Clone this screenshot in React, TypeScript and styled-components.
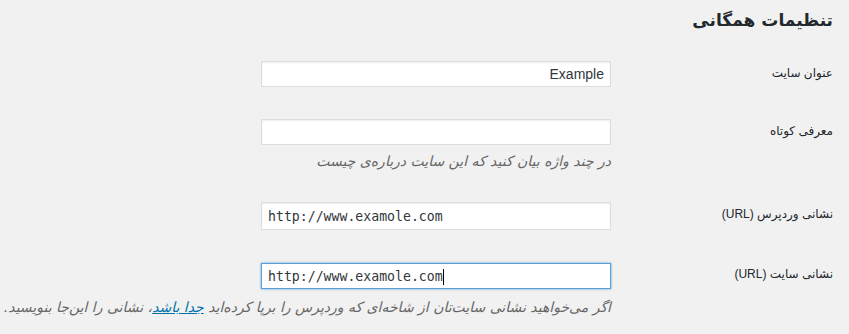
import React from "react";
import styled, { createGlobalStyle } from "styled-components";

const Global = createGlobalStyle`
  html, body { margin: 0; padding: 0; background: #f1f1f1; }
  body {
    direction: rtl;
    font-family: "Liberation Sans", "DejaVu Sans", sans-serif;
    font-size: 13px;
    color: #23282d;
  }
`;

const Wrap = styled.div`
  padding: 0 16px 0 0;
`;

const Title = styled.h1`
  margin: 0;
  padding: 7px 0 0;
  height: 38px;
  font-family: "DejaVu Sans", sans-serif;
  font-size: 17px;
  font-weight: 700;
  line-height: 26px;
  color: #23282d;
`;

const Form = styled.div`
  display: flex;
  flex-direction: column;
`;

const Row = styled.div`
  display: flex;
  align-items: flex-start;
`;

const Label = styled.label`
  flex: 0 0 202px;
  padding: 20px 0 0 10px;
  line-height: 17px;
  font-size: 12px;
  color: #23282d;
`;

const Field = styled.div`
  padding: 15px 10px;
`;

const InputBox = styled.div<{ $top?: number }>`
  position: relative;
  width: 350px;
  margin: ${(p) => p.$top ?? 1}px 0 1px;
`;

const TextInput = styled.input<{ $mono?: boolean; $focus?: boolean; $h?: number }>`
  box-sizing: border-box;
  display: block;
  width: 350px;
  height: ${(p) => p.$h ?? 26}px;
  margin: 0;
  padding: 3px 6px;
  border: 1px solid ${(p) => (p.$focus ? "#5b9dd9" : "#ddd")};
  border-radius: 0;
  background: #fff;
  color: #32373c;
  outline: none;
  box-shadow: ${(p) =>
    p.$focus ? "0 0 2px rgba(30,140,190,.8)" : "inset 0 1px 2px rgba(0,0,0,.07)"};
  font-family: ${(p) =>
    p.$mono ? '"DejaVu Sans Mono", "Liberation Mono", monospace' : '"Liberation Sans", "DejaVu Sans", sans-serif'};
  font-size: ${(p) => (p.$mono ? "13.2px" : "14px")};
  direction: ${(p) => (p.$mono ? "ltr" : "rtl")};
  text-align: ${(p) => (p.$mono ? "left" : "right")};
  caret-color: transparent;
`;

const Caret = styled.span`
  position: absolute;
  top: 6px;
  height: 16px;
  width: 1px;
  background: #000;
  left: calc(7px + 22ch);
  font-family: "DejaVu Sans Mono", "Liberation Mono", monospace;
  font-size: 13.2px;
`;

const Description = styled.p<{ $shift?: number }>`
  margin: ${(p) => 6 + (p.$shift ?? 0)}px 0 0;
  width: 350px;
  white-space: nowrap;
  font-family: "DejaVu Sans", sans-serif;
  font-style: italic;
  font-size: 14px;
  line-height: 20px;
  color: #666;
`;

const Link = styled.a`
  color: #0073aa;
  text-decoration: underline;
`;

export default function App() {
  return (
    <>
      <Global />
      <Wrap>
        <Title>تنظیمات همگانی</Title>
        <Form>
          <Row>
            <Label>عنوان سایت</Label>
            <Field>
              <InputBox>
                <TextInput defaultValue="Example" readOnly />
              </InputBox>
            </Field>
          </Row>
          <Row>
            <Label>معرفی کوتاه</Label>
            <Field>
              <InputBox>
                <TextInput defaultValue="" readOnly />
              </InputBox>
              <Description>در چند واژه بیان کنید که این سایت درباره‌ی چیست</Description>
            </Field>
          </Row>
          <Row>
            <Label>نشانی وردپرس (URL)</Label>
            <Field>
              <InputBox>
                <TextInput $mono $h={28} defaultValue="http://www.examole.com" readOnly />
              </InputBox>
            </Field>
          </Row>
          <Row>
            <Label>نشانی سایت (URL)</Label>
            <Field>
              <InputBox $top={2}>
                <TextInput $mono $focus $h={26} defaultValue="http://www.examole.com" readOnly />
                <Caret />
              </InputBox>
              <Description $shift={2}>
                اگر می‌خواهید نشانی سایت‌تان از شاخه‌ای که وردپرس را برپا کرده‌اید{" "}
                <Link href="#">جدا باشد</Link>، نشانی را این‌جا بنویسید.
              </Description>
            </Field>
          </Row>
        </Form>
      </Wrap>
    </>
  );
}
